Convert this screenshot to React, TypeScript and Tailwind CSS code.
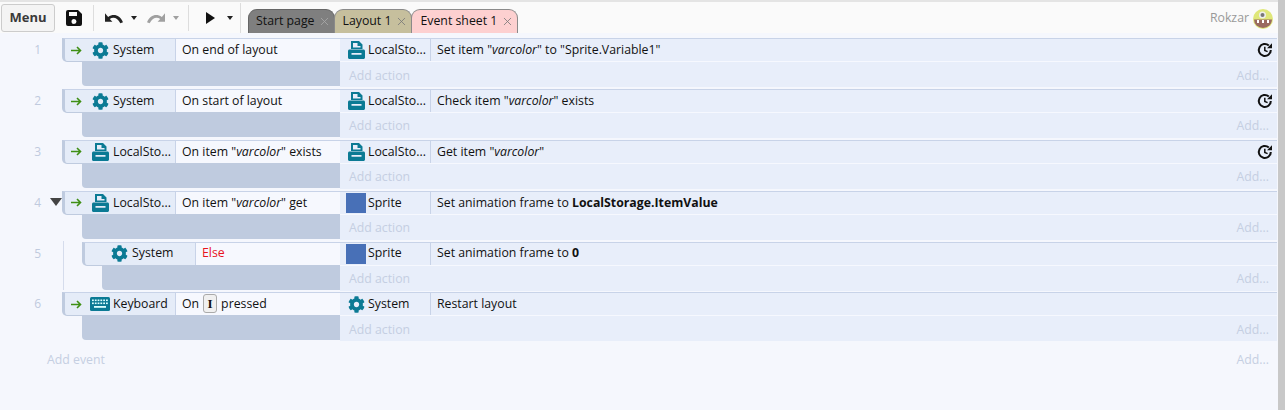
import React from 'react'
import { X } from 'lucide-react'
import { FaCog } from 'react-icons/fa'

const Gear = () => <FaCog size={17} color="#0b7a94" className="shrink-0" />

const Storage = () => (
  <svg width={17} height={18} viewBox="0 0 17 18" className="shrink-0">
    <path fill="#0b7a94" fillRule="evenodd" d="M3 0h8l3.500 3.500V8H3zM5 2v4.600h7.500V5H9.500V2zM1.500 8.400h14c.8 0 1.500.7 1.500 1.500v6.600c0 .8-.7 1.500-1.500 1.500h-14C.7 18 0 17.300 0 16.500V9.900C0 9.100.7 8.400 1.500 8.400zM3.500 12v1.800h10V12z" />
  </svg>
)

const Keys = () => (
  <svg width={20} height={14} viewBox="0 0 20 14" className="shrink-0">
    <rect width="20" height="14" rx="1.500" fill="#0b7a94" />
    {[0, 1, 2, 3, 4, 5].map(i => <rect key={i} x={2 + i * 2.8} y="2.500" width="1.800" height="1.600" fill="#dff" />)}
    {[0, 1, 2, 3, 4, 5].map(i => <rect key={i} x={2 + i * 2.800} y="5.500" width="1.800" height="1.600" fill="#dff" />)}
    <rect x="4" y="9" width="12" height="1.800" fill="#dff" />
  </svg>
)

const Arrow = () => (
  <svg width={11} height={9} viewBox="0 0 11 9" className="shrink-0">
    <path d="M0 4.500h8.500M6 1l3.500 3.500L6 8" fill="none" stroke="#3f8f14" strokeWidth="1.600" />
  </svg>
)

const History = () => (
  <svg width={16} height={16} viewBox="0 0 16 16">
    <path d="M13.800 8a6 6 0 1 1-2-4.500" fill="none" stroke="#111" strokeWidth="2" />
    <path d="M15 1.300v5h-5z" fill="#111" />
    <path d="M7.800 4.800v3.600l2.800 1.200" fill="none" stroke="#111" strokeWidth="1.500" />
  </svg>
)

const Swatch = () => <span className="w-5 h-5 bg-[#4870b7] shrink-0" />

type Ev = {
  n: number
  icon: React.ReactNode
  obj: string
  cond: React.ReactNode
  actIcon: React.ReactNode
  actObj: string
  act: React.ReactNode
  clock?: boolean
  nested?: boolean
  toggle?: boolean
}

const q = (s: string) => <>"<i>{s}</i>"</>

const events: Ev[] = [
  { n: 1, icon: <Gear />, obj: 'System', cond: 'On end of layout', actIcon: <Storage />, actObj: 'LocalSto...', act: <>Set item {q('varcolor')} to "Sprite.Variable1"</>, clock: true },
  { n: 2, icon: <Gear />, obj: 'System', cond: 'On start of layout', actIcon: <Storage />, actObj: 'LocalSto...', act: <>Check item {q('varcolor')} exists</>, clock: true },
  { n: 3, icon: <Storage />, obj: 'LocalSto...', cond: <>On item {q('varcolor')} exists</>, actIcon: <Storage />, actObj: 'LocalSto...', act: <>Get item {q('varcolor')}</>, clock: true },
  { n: 4, icon: <Storage />, obj: 'LocalSto...', cond: <>On item {q('varcolor')} get</>, actIcon: <Swatch />, actObj: 'Sprite', act: <>Set animation frame to <b>LocalStorage.ItemValue</b></>, toggle: true },
  { n: 5, icon: <Gear />, obj: 'System', cond: <span className="text-[#e8141c]">Else</span>, actIcon: <Swatch />, actObj: 'Sprite', act: <>Set animation frame to <b>0</b></>, nested: true },
  {
    n: 6,
    icon: <Keys />,
    obj: 'Keyboard',
    cond: (
      <span className="flex items-center">
        On
        <span className="mx-1 mb-[2px] w-[14px] h-[19px] border border-[#aaa] rounded-[3px] bg-[#f0f0f0] flex items-center justify-center font-['Liberation_Serif',serif] font-bold text-[13px] leading-none">I</span>
        pressed
      </span>
    ),
    actIcon: <Gear />,
    actObj: 'System',
    act: 'Restart layout',
  },
]

function EventRow({ ev }: { ev: Ev }) {
  return (
    <div className="flex h-[50.8px]">
      <div className="w-[62px] shrink-0 relative">
        <span className="absolute left-0 w-[41px] text-right top-[3px] text-[12px] text-[#c0cade]">{ev.n}</span>
        {ev.toggle && <span className="absolute left-[50px] top-[7px] w-0 h-0 border-l-[6px] border-r-[6px] border-t-[8px] border-l-transparent border-r-transparent border-t-[#444]" />}
        {ev.nested && <span className="absolute left-[63px] -top-[1px] h-[49px] w-px bg-[#d5dcec]" />}
      </div>
      <div className={`shrink-0 flex flex-col ${ev.nested ? 'w-[258px] ml-[20px]' : 'w-[278px]'}`}>
        <div className="flex h-[24px] border-t border-[#c8d3e8] border-l-[3px] border-l-[#bfcbdf] border-b border-b-[#bfcbdf] rounded-bl-[5px] bg-[#e5ecf8]">
          <div className={`flex items-center shrink-0 border-r border-[#c8d3e8] w-[111px] ${ev.nested ? 'pl-[24px]' : 'pl-[6px]'}`}>
            {!ev.nested && <Arrow />}
            <span className={`flex items-center gap-[3px] ${ev.nested ? '' : 'ml-[8px]'}`}>
              <span className="w-[20px] flex justify-center shrink-0">{ev.icon}</span>
              <span className="whitespace-nowrap">{ev.obj}</span>
            </span>
          </div>
          <div className="flex-1 bg-[#f6f8fe] pl-[6px] flex items-center whitespace-nowrap">{ev.cond}</div>
        </div>
        <div className="h-[24px] ml-[20px] bg-[#bfcbdf] rounded-bl-[4px]" />
      </div>
      <div className="w-[937px] shrink-0 flex flex-col bg-[#e8eefa] border-t border-[#c8d3e8] h-[49px]">
        <div className="flex h-[23px] border-b border-[#f6f8fe] items-center">
          <div className="w-[91px] shrink-0 h-full flex items-center gap-[2px] pl-[6px] border-r border-[#c8d3e8]">
            <span className="w-[20px] flex justify-center shrink-0">{ev.actIcon}</span>
            <span className="whitespace-nowrap">{ev.actObj}</span>
          </div>
          <div className="flex-1 pl-[6px] whitespace-nowrap">{ev.act}</div>
          {ev.clock && <div className="pr-[4px] flex"><History /></div>}
        </div>
        <div className="flex justify-between items-center h-[25px] pl-[9px] pr-[8px] pt-[2px] text-[#c5cfe2]">
          <span>Add action</span>
          <span>Add...</span>
        </div>
      </div>
    </div>
  )
}

function Tab({ label, className, xColor }: { label: string; className: string; xColor: string }) {
  return (
    <div className={`h-[24px] pr-[3px] flex items-center rounded-t-[9px] border border-b-0 -mr-px ${className}`}>
      <span className="whitespace-nowrap">{label}</span>
      <X size={13} strokeWidth={1.500} className={xColor} />
    </div>
  )
}

const Caret = ({ className }: { className: string }) => (
  <span className={`w-0 h-0 border-l-[3px] border-r-[3px] border-t-[4px] border-l-transparent border-r-transparent ${className}`} />
)

export default function App() {
  return (
    <div className="w-[1285px] h-[410px] overflow-hidden bg-[#f5f7fd] font-['Open_Sans','Noto_Sans',sans-serif] text-[12.3px] text-[#111] flex">
      <div className="w-[1278px] flex flex-col">
        <div className="h-[33px] shrink-0 bg-[#fafafa] border-t-2 border-[#e4e4e4] flex items-end">
          <div className="h-[31px] flex items-center pl-[1px] w-[248px] shrink-0">
            <button className="h-[28px] w-[54px] rounded-[3px] border border-[#ccc] bg-[#f4f4f4] font-bold text-[13px] text-[#3a3a3a]">Menu</button>
            <svg width={16} height={16} viewBox="0 0 16 16" className="ml-[11px] shrink-0">
              <path fill="#111" fillRule="evenodd" d="M2 0h10l4 4v10a2 2 0 0 1-2 2H2a2 2 0 0 1-2-2V2a2 2 0 0 1 2-2zM3 2v4h8V2zM8 9a2.500 2.500 0 1 0 0 5 2.500 2.500 0 0 0 0-5z" />
            </svg>
            <span className="w-px h-[26px] bg-[#ddd] ml-[11px]" />
            <svg width={18} height={12} viewBox="0 0 17 11" className="ml-[11px] shrink-0">
              <path fill="#222" d="M0 1v8h7L4.500 6.500C7.500 4.500 11.500 4.800 14.500 10.500L17 9.500C14 2.500 8 1 3 4.500z" />
            </svg>
            <Caret className="ml-[8px] border-t-[#222]" />
            <svg width={18} height={12} viewBox="0 0 17 11" className="ml-[10px] shrink-0">
              <path fill="#a0a0a0" d="M17 1v8h-7l2.500-2.500C9.500 4.500 5.500 4.800 2.500 10.500L0 9.500C3 2.500 9 1 14 4.500z" />
            </svg>
            <Caret className="ml-[8px] border-t-[#a0a0a0]" />
            <span className="w-px h-[26px] bg-[#ddd] ml-[9px]" />
            <span className="ml-[17px] w-0 h-0 border-t-[6px] border-b-[6px] border-l-[9px] border-t-transparent border-b-transparent border-l-[#111]" />
            <Caret className="ml-[12px] border-t-[#222]" />
            <span className="w-px h-[30px] bg-[#ddd] ml-[7px]" />
          </div>
          <div className="flex items-end">
            <Tab label="Start page" className="bg-[#7f7f7f] border-[#666] pl-[7px] gap-[3px]" xColor="text-[#aaa]" />
            <Tab label="Layout 1" className="bg-[#c6bf9d] border-[#8a8a8a] pl-[8px] gap-[4px]" xColor="text-[#777]" />
            <Tab label="Event sheet 1" className="bg-[#fdd0d0] border-[#8a8a8a] pl-[8px] gap-[4px]" xColor="text-[#777]" />
          </div>
          <div className="ml-auto h-full flex items-center gap-[4px] pr-[5px] pt-[2px] text-[#999]">
            <span>Rokzar</span>
            <svg width={20} height={20} viewBox="0 0 20 20">
              <circle cx="10" cy="10" r="10" fill="#dfe779" />
              <path d="M1 10.500h18a9 8.500 0 0 1-18 0z" fill="#9a6a60" />
              <circle cx="9.500" cy="6" r="3.500" fill="#eee" />
              <circle cx="9.500" cy="6" r="2" fill="#777" />
              <rect x="4" y="11" width="2" height="3" fill="#fff" />
              <rect x="9" y="11" width="2" height="3" fill="#fff" />
              <rect x="14" y="11" width="2" height="3" fill="#fff" />
            </svg>
          </div>
        </div>
        <div className="mt-[5.4px]">
          {events.map(ev => <EventRow key={ev.n} ev={ev} />)}
        </div>
        <div className="flex justify-between pl-[47px] pr-[9px] pt-[8px] text-[#c5cfe2]">
          <span>Add event</span>
          <span>Add...</span>
        </div>
      </div>
      <div className="w-[7px] bg-[#c8c8c8]" />
    </div>
  )
}
